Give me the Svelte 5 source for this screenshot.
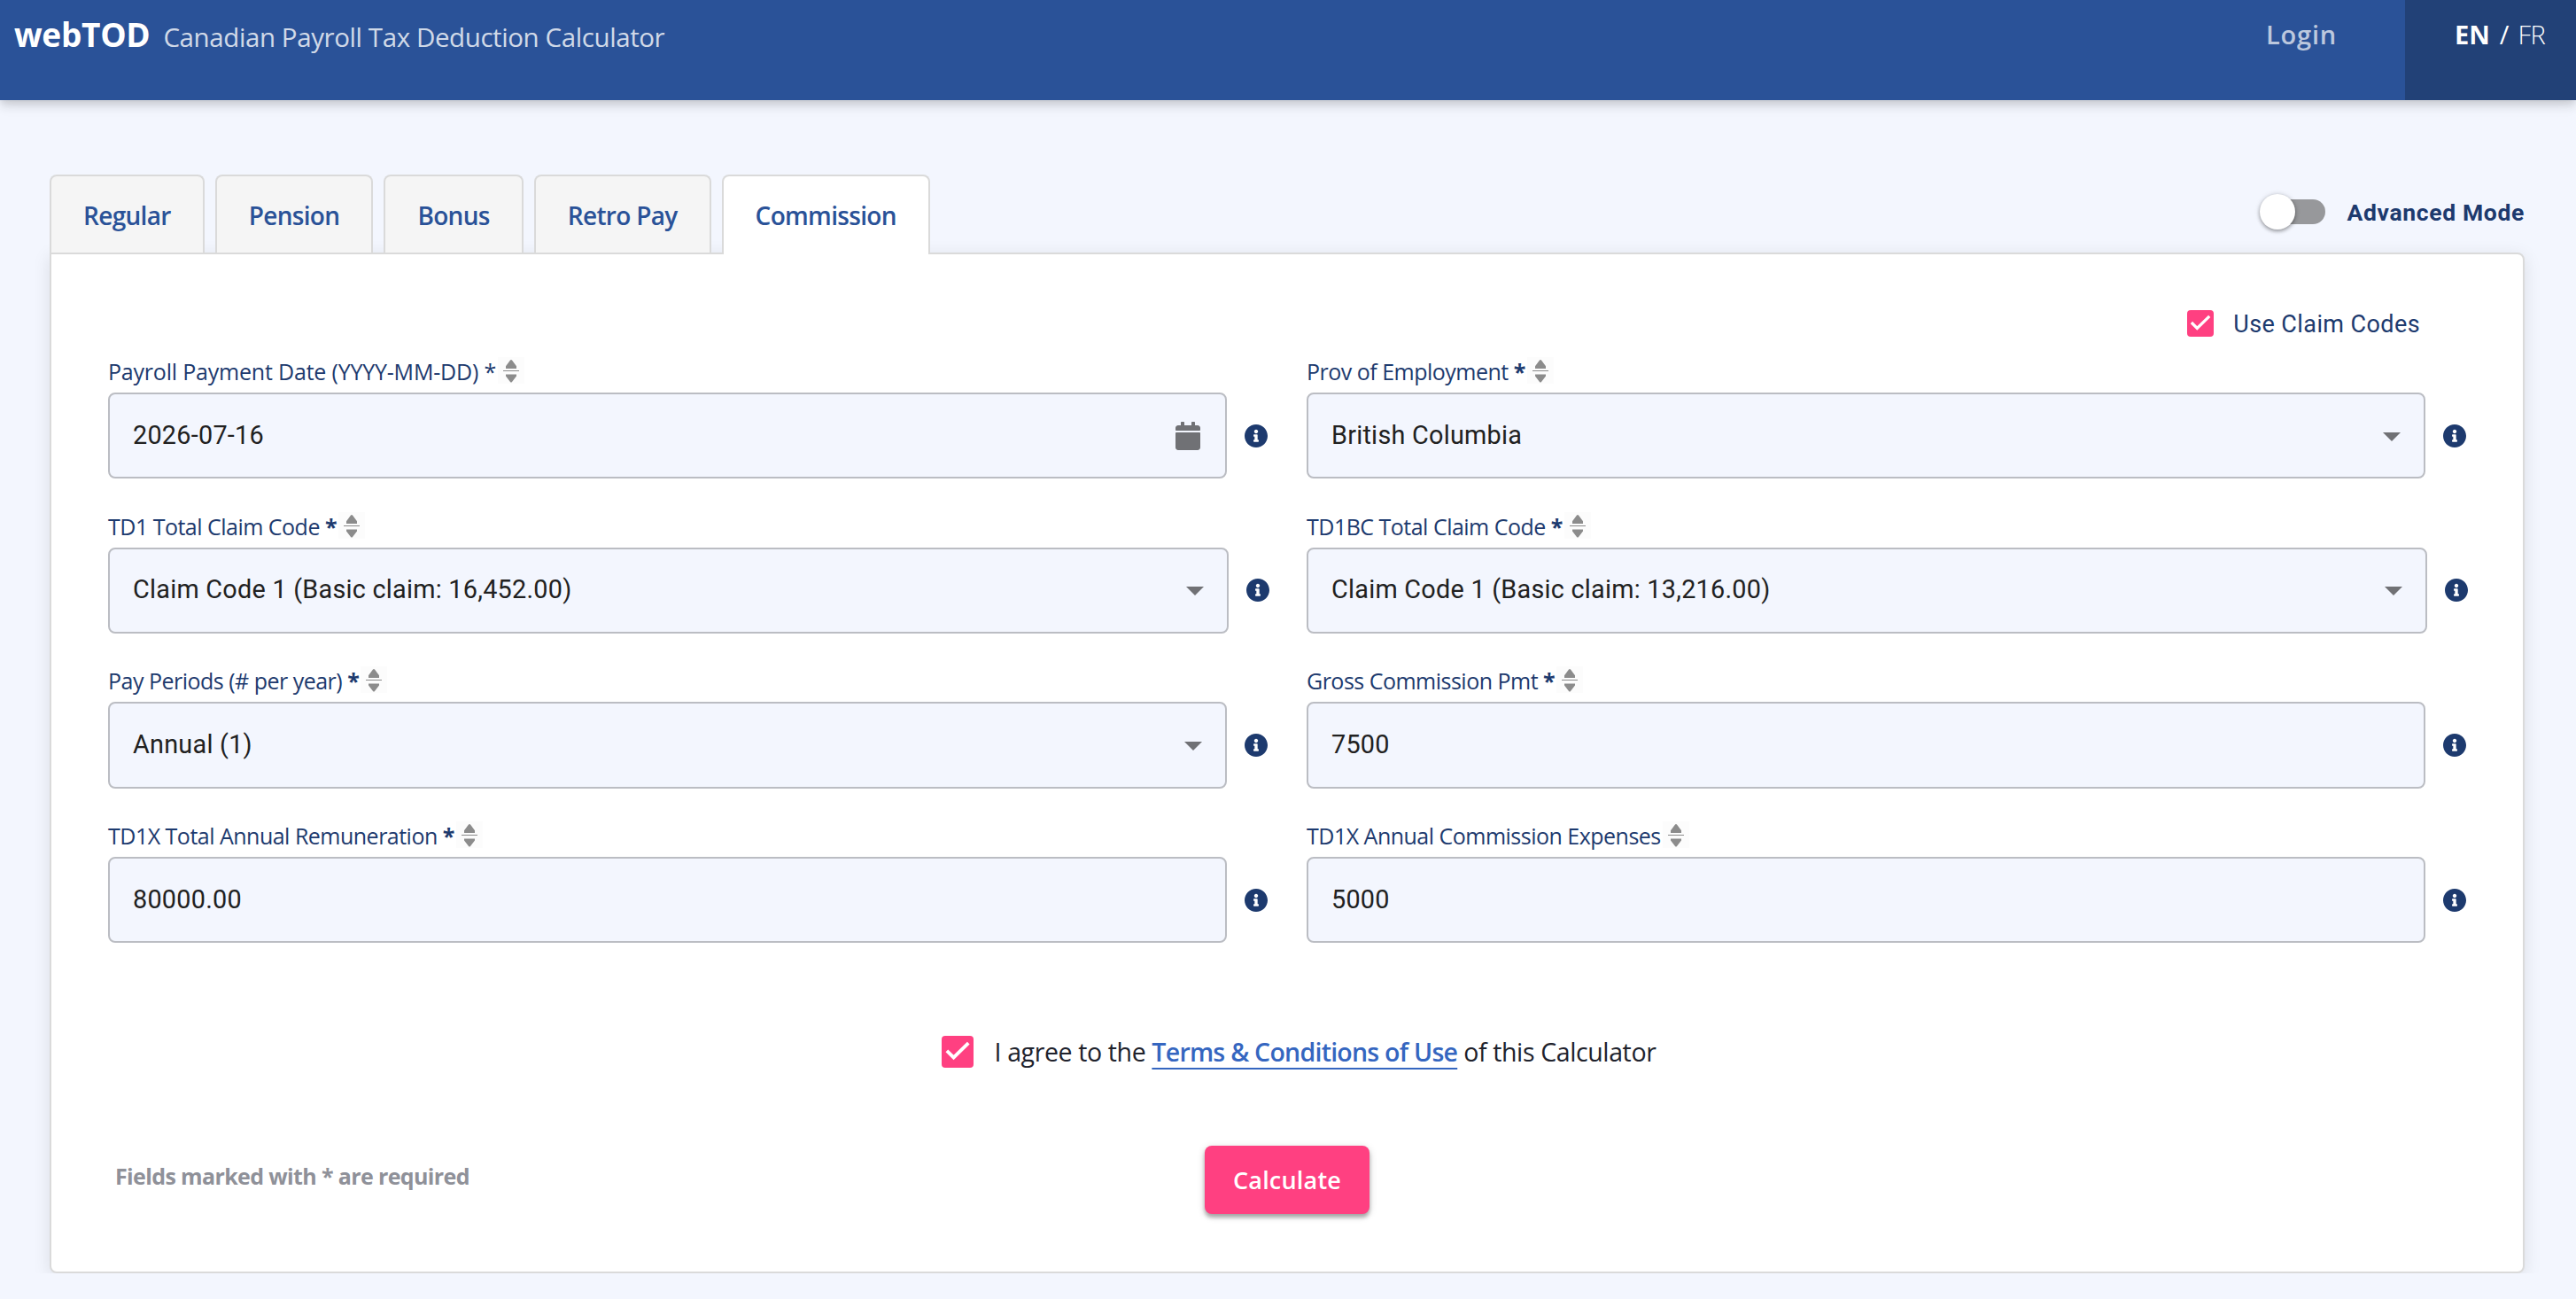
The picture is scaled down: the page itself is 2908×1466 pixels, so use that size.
<script lang="ts">
  type Field = { label: string; required?: boolean; value: string; kind: string; wide?: boolean; plain?: boolean };

  const tabs = ['Regular', 'Pension', 'Bonus', 'Retro Pay', 'Commission'];
  let active = $state('Commission');

  const fields: Field[] = [
    { label: 'Payroll Payment Date (YYYY-MM-DD)', required: true, plain: true, value: '2026-07-16', kind: 'date' },
    { label: 'Prov of Employment', required: true, value: 'British Columbia', kind: 'select' },
    { label: 'TD1 Total Claim Code', required: true, value: 'Claim Code 1 (Basic claim: 16,452.00)', kind: 'select', wide: true },
    { label: 'TD1BC Total Claim Code', required: true, value: 'Claim Code 1 (Basic claim: 13,216.00)', kind: 'select', wide: true },
    { label: 'Pay Periods (# per year)', required: true, value: 'Annual (1)', kind: 'select' },
    { label: 'Gross Commission Pmt', required: true, value: '7500', kind: 'text' },
    { label: 'TD1X Total Annual Remuneration', required: true, value: '80000.00', kind: 'text' },
    { label: 'TD1X Annual Commission Expenses', value: '5000', kind: 'text' },
  ];
</script>

{#snippet check()}
  <svg class="check" viewBox="0 0 30 30"><path d="M4.9 14l6.4 6.4L25.2 6.8" /></svg>
{/snippet}

<header>
  <div class="brand">
    <strong>webTOD</strong>
    <span class="tagline">Canadian Payroll Tax Deduction Calculator</span>
  </div>
  <div class="login">Login</div>
  <div class="lang"><b>EN</b><span class="slash">/</span><span class="fr">FR</span></div>
</header>

<main>
  <div class="top">
    <nav>
      {#each tabs as tab}
        <button class="tab" class:active={tab === active} onclick={() => (active = tab)}>{tab}</button>
      {/each}
    </nav>
    <div class="advanced">
      <div class="toggle"><div class="thumb"></div></div>
      <span>Advanced Mode</span>
    </div>
  </div>

  <section class="panel">
    <div class="claim">
      <span class="box">{@render check()}</span>
      <span class="claim-text">Use Claim Codes</span>
    </div>

    <div class="fields">
      {#each fields as f}
        <div class="field" class:wide={f.wide}>
          <div class="label" class:plain={f.plain}>
            <span>{f.label}{#if f.required}{' '}<span class="star">*</span>{/if}</span>
            <svg class="sorter" viewBox="0 0 30 30">
              <path d="M14 3.6q1-1 2 0l5 6.6v2.8H9v-2.8z M9 19.4h12v2.2l-5 6.4q-1 1-2 0l-5-6.4z" />
              <path class="line" d="M6 15.5h18" />
            </svg>
          </div>
          <div class="row">
            <div class="control">
              <span class="value">{f.value}</span>
              {#if f.kind === 'date'}
                <svg class="calendar" viewBox="0 0 448 512"><path d="M12 192h424c6.6 0 12 5.4 12 12v260c0 26.5-21.5 48-48 48H48c-26.5 0-48-21.5-48-48V204c0-6.6 5.4-12 12-12zm436-44v-36c0-26.5-21.5-48-48-48h-48V12c0-6.6-5.4-12-12-12h-40c-6.6 0-12 5.4-12 12v52H160V12c0-6.6-5.4-12-12-12h-40c-6.6 0-12 5.4-12 12v52H48C21.5 64 0 85.5 0 112v36c0 6.6 5.4 12 12 12h424c6.6 0 12-5.4 12-12z" /></svg>
              {:else if f.kind === 'select'}
                <svg class="caret" viewBox="0 0 20 10"><path d="M0 0h20L10 10z" /></svg>
              {/if}
            </div>
            <svg class="info" viewBox="8 8 496 496"><path d="M256 8C119.043 8 8 119.083 8 256c0 136.997 111.043 248 248 248s248-111.003 248-248C504 119.083 392.957 8 256 8zm0 110c23.196 0 42 18.804 42 42s-18.804 42-42 42-42-18.804-42-42 18.804-42 42-42zm56 254c0 6.627-5.373 12-12 12h-88c-6.627 0-12-5.373-12-12v-24c0-6.627 5.373-12 12-12h12v-64h-12c-6.627 0-12-5.373-12-12v-24c0-6.627 5.373-12 12-12h64c6.627 0 12 5.373 12 12v100h12c6.627 0 12 5.373 12 12v24z" /></svg>
          </div>
        </div>
      {/each}
    </div>

    <div class="agree">
      <span class="box big">{@render check()}</span>
      <p>I agree to the <a href="#terms">Terms &amp; Conditions of Use</a> of this Calculator</p>
    </div>

    <div class="actions">
      <span class="note">Fields marked with * are required</span>
      <button class="calculate">Calculate</button>
    </div>
  </section>
</main>

<style>
  :global(body) {
    background: #f3f6fe;
    font-family: 'Segoe UI', 'Open Sans', 'Noto Sans', sans-serif;
    color: #1d3a6e;
    overflow: hidden;
  }

  header {
    display: flex;
    height: 113px;
    line-height: 78px;
    background: #2a5298;
    color: #fff;
    box-shadow: 0 4px 8px -2px rgba(0, 0, 0, 0.1), 0 8px 10px rgba(0, 0, 0, 0.07), 0 2px 20px rgba(0, 0, 0, 0.08);
  }
  .brand {
    flex: 1;
    display: flex;
    align-items: baseline;
    gap: 15px;
    padding-left: 16px;
    line-height: 77px;
    white-space: nowrap;
  }
  .brand strong {
    font-size: 37px;
    font-weight: 700;
    letter-spacing: -0.3px;
  }
  .tagline {
    font-size: 29.5px;
    letter-spacing: -0.41px;
    color: rgba(255, 255, 255, 0.8);
  }
  .login {
    width: 157px;
    font-size: 29px;
    font-weight: 650;
    letter-spacing: 0.8px;
    color: rgba(255, 255, 255, 0.7);
  }
  .lang {
    box-sizing: border-box;
    width: 193px;
    padding-left: 56px;
    background: #224177;
    font-size: 29px;
  }
  .slash {
    margin: 0 10px 0 11px;
  }
  .fr {
    font-weight: 300;
    letter-spacing: -0.5px;
  }

  main {
    padding: 84px 58px 0 56px;
  }
  .top {
    display: flex;
    justify-content: space-between;
    height: 88px;
  }
  nav {
    display: flex;
    gap: 12px;
    height: 90px;
  }
  .tab {
    height: 88px;
    padding: 2px 36px 0;
    border: 2px solid #dadada;
    border-bottom: none;
    border-radius: 8px 8px 0 0;
    background: #f5f5f5;
    font: 600 28px 'Segoe UI', 'Open Sans', sans-serif;
    letter-spacing: -0.68px;
    color: #2a5298;
  }
  .tab.active {
    position: relative;
    z-index: 1;
    height: 90px;
    padding-top: 0;
    background: #fff;
  }
  .advanced {
    display: flex;
    align-items: center;
    gap: 25px;
    height: 84px;
    font: 700 26.5px Roboto, sans-serif;
    letter-spacing: 0.65px;
  }
  .toggle {
    display: flex;
    align-items: center;
    width: 72px;
    height: 28px;
    border-radius: 14px;
    background: #97989b;
  }
  .thumb {
    flex: none;
    width: 40px;
    height: 40px;
    margin-left: -2px;
    border-radius: 50%;
    background: #fff;
    box-shadow: 0 2px 4px rgba(0, 0, 0, 0.35), 0 0 6px rgba(0, 0, 0, 0.12);
  }

  .panel {
    box-sizing: border-box;
    height: 1152px;
    padding: 63px 64px 0;
    border: 2px solid #dadada;
    border-radius: 0 8px 8px 8px;
    background: #fff;
    box-shadow: 0 4px 20px rgba(0, 0, 0, 0.1);
  }
  .claim {
    display: flex;
    justify-content: flex-end;
    align-items: center;
    gap: 22px;
    height: 30px;
    padding-right: 52px;
    font: 27px Roboto, sans-serif;
    letter-spacing: 0.4px;
  }
  .claim-text {
    padding-top: 1px;
  }
  .box {
    display: flex;
    width: 30px;
    height: 30px;
    border-radius: 4px;
    background: #ff4081;
  }
  .box.big {
    width: 36px;
    height: 36px;
  }
  .check {
    width: 100%;
    fill: none;
    stroke: #fff;
    stroke-width: 3.2;
  }

  .fields {
    display: grid;
    grid-template-columns: 1fr 1fr;
    column-gap: 44px;
    row-gap: 37.33px;
    margin-top: 23px;
  }
  .field.wide {
    margin-right: -2px;
  }
  .label {
    display: flex;
    gap: 2px;
    height: 30px;
    margin-bottom: 10px;
    font-size: 25px;
    line-height: 32px;
    letter-spacing: -0.51px;
    white-space: nowrap;
  }
  .label.plain {
    letter-spacing: -0.2px;
  }
  .star {
    font-weight: 700;
  }
  .plain .star {
    font-weight: 400;
  }
  .sorter {
    width: 30px;
    height: 30px;
    background: #fcfcfc;
    fill: #8c8c8c;
  }
  .line {
    stroke: #8c8c8c;
    stroke-width: 1;
  }
  .row {
    display: flex;
    align-items: center;
    gap: 20px;
  }
  .control {
    box-sizing: border-box;
    flex: 1;
    display: flex;
    align-items: center;
    justify-content: space-between;
    height: 97.33px;
    padding: 0 26px;
    border: 2px solid #bbbdc3;
    border-radius: 8px;
    background: #f3f6fe;
    font: 28.8px Roboto, sans-serif;
    letter-spacing: 0.25px;
    color: #212121;
  }
  .value {
    padding-bottom: 2px;
  }
  .calendar {
    width: 28px;
    height: 32px;
    margin-right: 2px;
    fill: #707175;
  }
  .caret {
    width: 20px;
    height: 10px;
    margin-top: 2px;
    fill: #707175;
  }
  .info {
    width: 26px;
    height: 26px;
    fill: #1d3a6e;
  }

  .agree {
    display: flex;
    justify-content: center;
    align-items: center;
    gap: 24px;
    height: 36px;
    margin-top: 105px;
    padding-left: 26px;
    font-size: 28.5px;
    letter-spacing: -0.38px;
    color: #20222c;
  }
  .agree p {
    margin: 0;
    white-space: pre;
  }
  .agree a {
    font-weight: 600;
    letter-spacing: -0.75px;
    color: #3566c0;
    text-decoration: underline 2px;
    text-decoration-skip-ink: none;
    text-underline-offset: 7px;
  }
  .actions {
    display: grid;
    grid-template-columns: 1fr auto 1fr;
    align-items: center;
    margin-top: 88px;
  }
  .note {
    margin: 0 0 9px 8px;
    font-size: 25px;
    font-weight: 700;
    letter-spacing: -0.63px;
    color: #8f9199;
  }
  .calculate {
    width: 186px;
    height: 77px;
    padding: 0;
    border: none;
    border-radius: 8px;
    background: #ff4081;
    box-shadow: 0 4px 4px rgba(0, 0, 0, 0.28), 0 2px 10px rgba(0, 0, 0, 0.16);
    font: 650 27px 'Segoe UI', 'Open Sans', sans-serif;
    letter-spacing: 0.2px;
    color: #fff;
  }
</style>
